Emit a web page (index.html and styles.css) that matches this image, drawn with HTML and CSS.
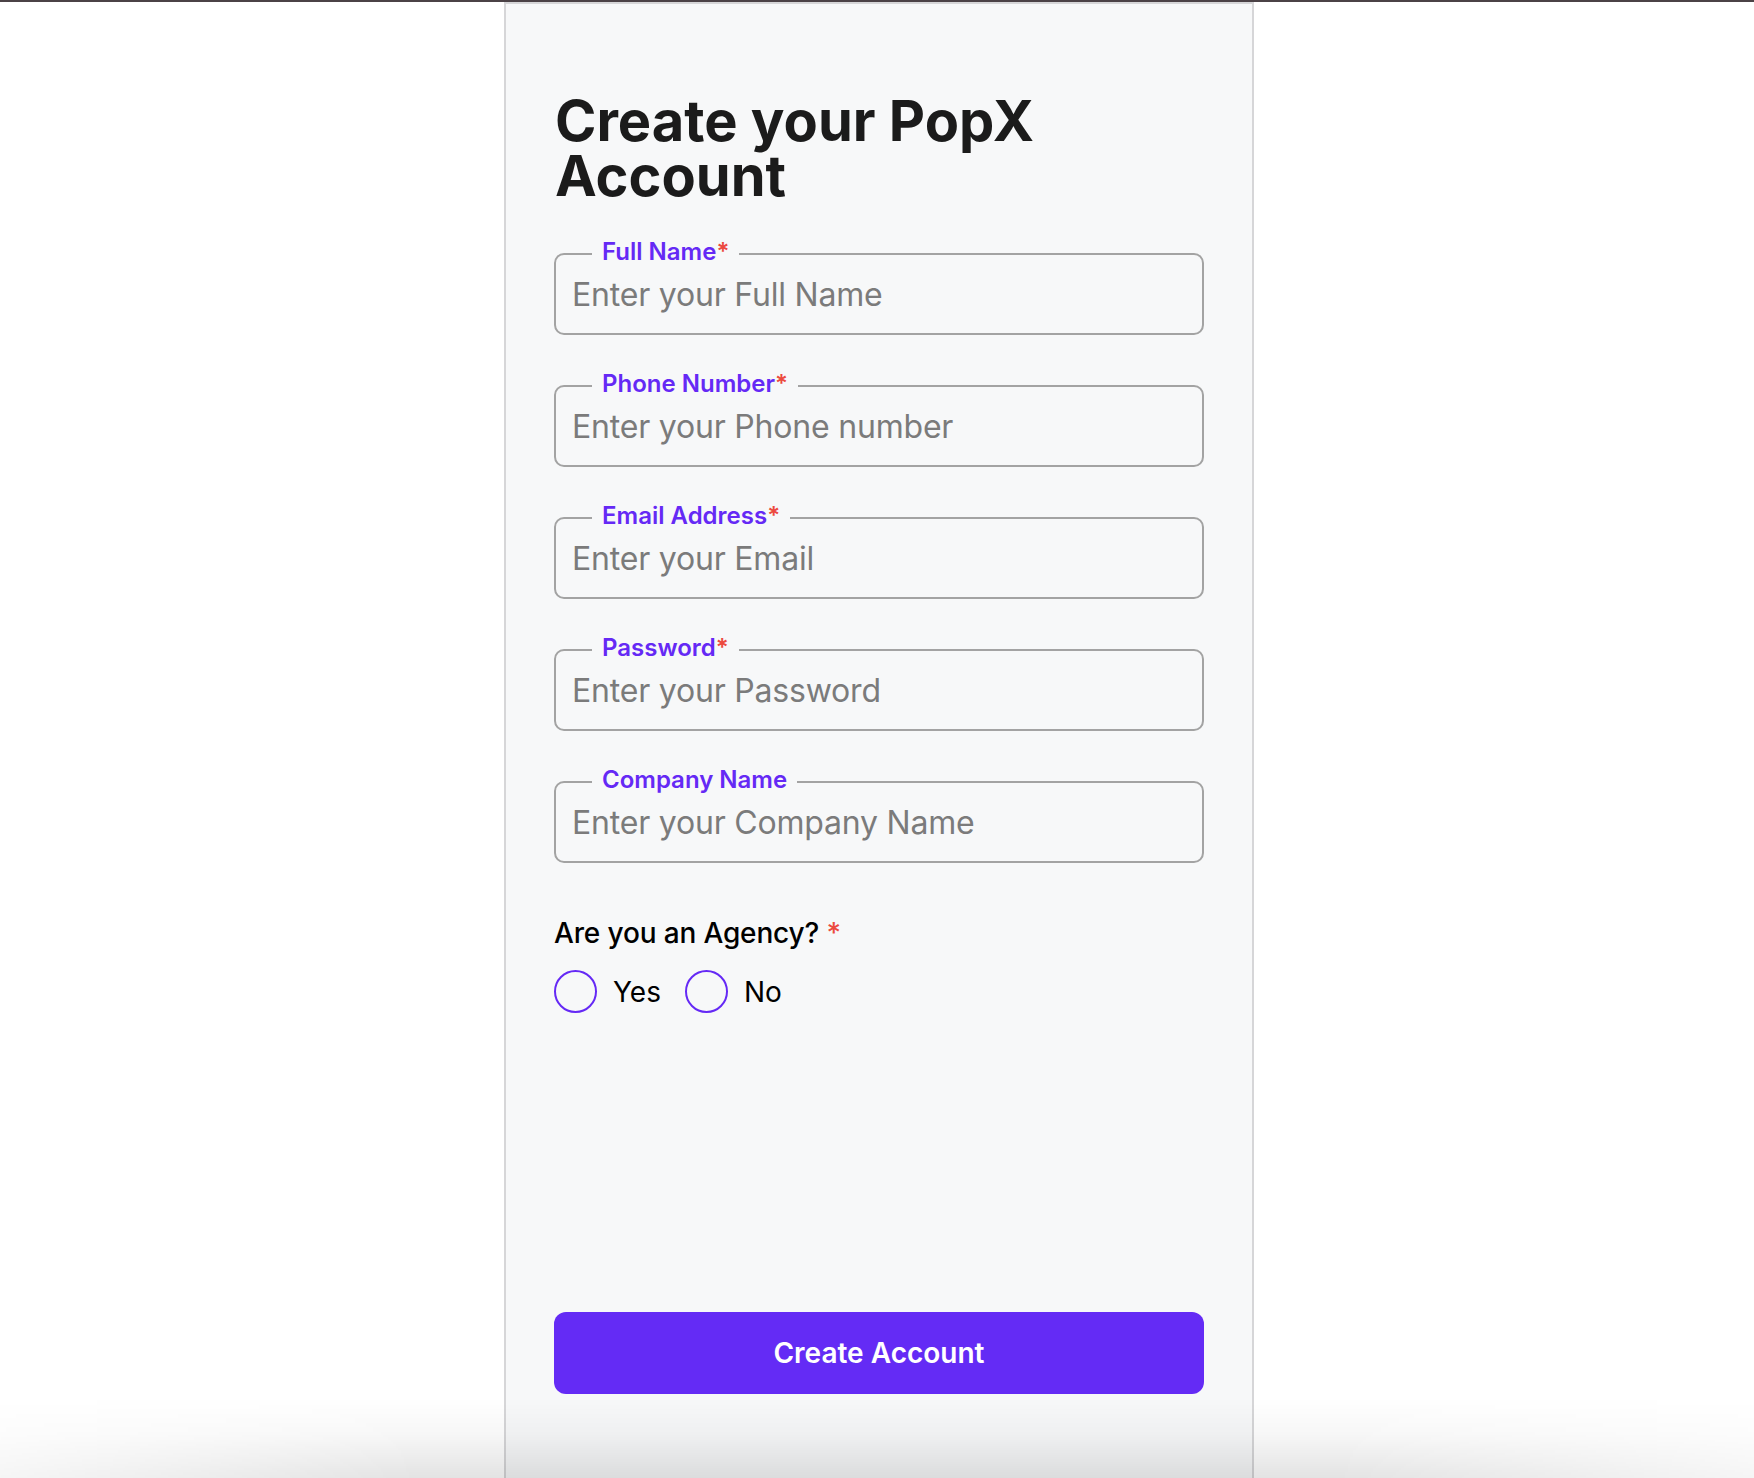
FILE: index.html
```html
<!DOCTYPE html>
<html lang="en">
<head>
<meta charset="utf-8">
<title>Create your PopX Account</title>
<link rel="stylesheet" href="styles.css">
</head>
<body>
<div class="topbar"></div>
<main class="page">
  <form class="card">
    <h1 class="title">Create your PopX Account</h1>
    <div class="fields">
      <div class="field">
        <label class="field-label" for="fullname">Full Name<span class="req">*</span></label>
        <input id="fullname" class="field-input" type="text" placeholder="Enter your Full Name">
      </div>
      <div class="field">
        <label class="field-label" for="phone">Phone Number<span class="req">*</span></label>
        <input id="phone" class="field-input" type="tel" placeholder="Enter your Phone number">
      </div>
      <div class="field">
        <label class="field-label" for="email">Email Address<span class="req">*</span></label>
        <input id="email" class="field-input" type="email" placeholder="Enter your Email">
      </div>
      <div class="field">
        <label class="field-label" for="password">Password<span class="req">*</span></label>
        <input id="password" class="field-input" type="password" placeholder="Enter your Password">
      </div>
      <div class="field">
        <label class="field-label" for="company">Company Name</label>
        <input id="company" class="field-input" type="text" placeholder="Enter your Company Name">
      </div>
    </div>
    <div class="agency">
      <p class="agency-q">Are you an Agency? <span class="req">*</span></p>
      <div class="radios">
        <label class="radio"><input class="radio-input" type="radio" name="agency" value="yes"><span class="radio-circle"></span>Yes</label>
        <label class="radio"><input class="radio-input" type="radio" name="agency" value="no"><span class="radio-circle"></span>No</label>
      </div>
    </div>
    <button class="submit" type="submit">Create Account</button>
  </form>
</main>
<div class="bottom-shade"></div>
</body>
</html>
```

FILE: styles.css
```css
* {
  box-sizing: border-box;
}

html,
body {
  margin: 0;
  padding: 0;
}

body {
  background: #ffffff;
  font-family: Inter, "Noto Sans", "Liberation Sans", sans-serif;
  color: #1a1a1a;
  overflow: hidden;
}

.topbar {
  height: 2px;
  background: #4b4246;
}

.page {
  display: flex;
  justify-content: center;
  padding-left: 4px;
}

.card {
  width: 750px;
  min-height: 1476px;
  background: #f7f8f9;
  border: 2px solid #d6d6d8;
  border-bottom: 0;
  display: flex;
  flex-direction: column;
  padding: 90px 48px 84px 48px;
}

.title {
  margin: 0 0 0 1px;
  font-size: 56px;
  line-height: 55px;
  font-weight: 700;
  color: #1b1b1b;
  letter-spacing: 0;
}

.fields {
  margin-top: 49px;
  display: flex;
  flex-direction: column;
  gap: 50px;
}

.field {
  position: relative;
  height: 82px;
  border: 2px solid #a3a3a3;
  border-radius: 10px;
}

.field-label {
  position: absolute;
  top: -18px;
  left: 36px;
  padding: 0 10px;
  background: #f7f8f9;
  font-size: 24px;
  line-height: 29px;
  font-weight: 600;
  color: #6529f5;
}

.req {
  color: #ec4a3f;
}

.field-input {
  display: block;
  width: 100%;
  height: 100%;
  border: 0;
  outline: none;
  background: transparent;
  padding: 0 16px;
  font-family: inherit;
  font-size: 32px;
  letter-spacing: -0.2px;
  color: #1a1a1a;
}

.field-input::placeholder {
  color: #7b7b7b;
}

.agency {
  margin-top: 53px;
}

.agency-q {
  margin: 0;
  font-size: 28px;
  line-height: 34px;
  font-weight: 500;
  letter-spacing: -0.15px;
  color: #000000;
}

.radios {
  margin-top: 20px;
  display: flex;
  align-items: center;
  gap: 24px;
}

.radio {
  display: flex;
  align-items: center;
  gap: 16px;
  font-size: 28px;
  line-height: 34px;
  color: #000000;
  cursor: pointer;
}

.radio-input {
  display: none;
}

.radio-circle {
  width: 43px;
  height: 43px;
  border: 2px solid #6529f5;
  border-radius: 50%;
}

.submit {
  margin-top: auto;
  height: 82px;
  border: 0;
  border-radius: 12px;
  background: #642bf5;
  color: #ffffff;
  font-family: inherit;
  font-size: 28px;
  font-weight: 600;
  cursor: pointer;
}

.bottom-shade {
  position: fixed;
  left: 0;
  right: 0;
  bottom: 0;
  height: 80px;
  pointer-events: none;
  background: linear-gradient(to bottom, rgba(0, 0, 0, 0) 0%, rgba(0, 0, 0, 0.03) 45%, rgba(0, 0, 0, 0.11) 100%);
  -webkit-mask-image: linear-gradient(to right, rgba(0, 0, 0, 0.35) 0, #000 420px, #000 calc(100% - 420px), rgba(0, 0, 0, 0.35) 100%);
  mask-image: linear-gradient(to right, rgba(0, 0, 0, 0.35) 0, #000 420px, #000 calc(100% - 420px), rgba(0, 0, 0, 0.35) 100%);
}
```
